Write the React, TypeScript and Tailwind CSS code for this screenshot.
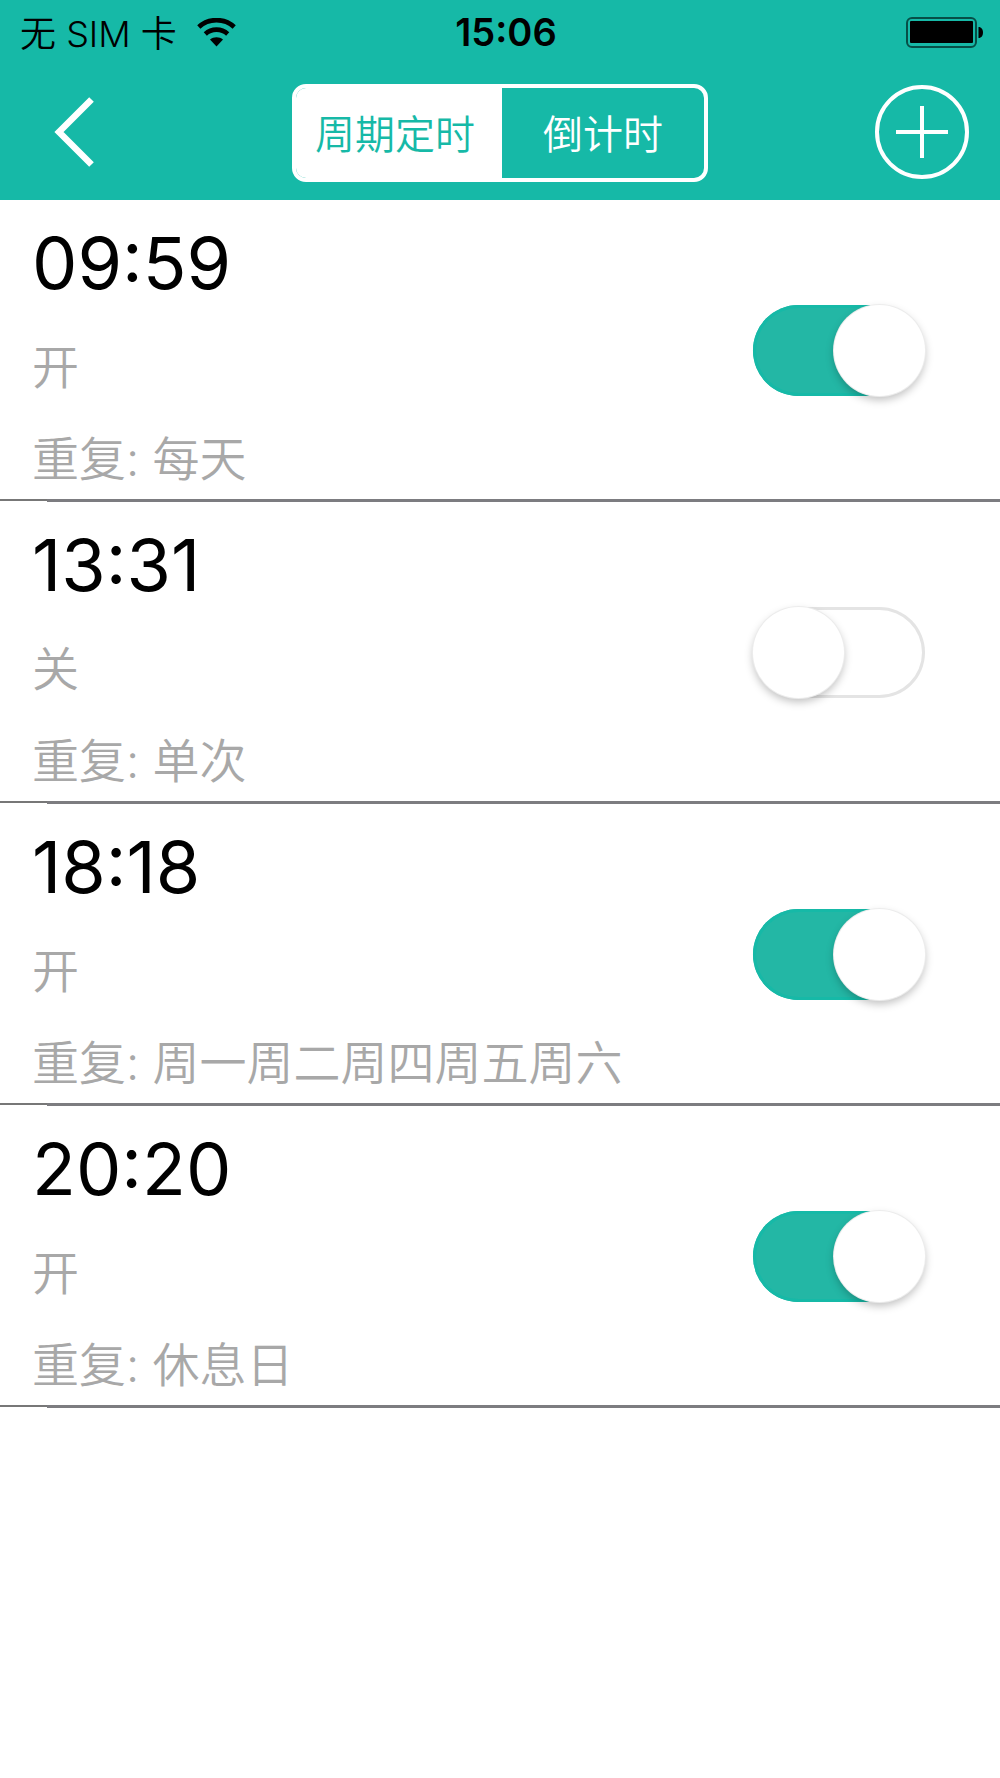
import React, { useState } from 'react';

interface Timer {
  id: number;
  time: string;
  repeat: string;
  enabled: boolean;
}

type TabKey = 'cycle' | 'countdown';

const INITIAL_TIMERS: Timer[] = [
  { id: 1, time: '09:59', repeat: '每天', enabled: true },
  { id: 2, time: '13:31', repeat: '单次', enabled: false },
  { id: 3, time: '18:18', repeat: '周一周二周四周五周六', enabled: true },
  { id: 4, time: '20:20', repeat: '休息日', enabled: true },
];

const StatusBar: React.FC = () => (
  <div className="grid h-16 grid-cols-3 items-center pl-5 pr-4 leading-[40px] text-black">
    <div className="flex items-center gap-5">
      <span className="whitespace-nowrap pt-1 text-[36px] font-[350]">无 SIM 卡</span>
      <svg className="h-[29px] w-[39px]" viewBox="0 0 39 29" fill="none" stroke="currentColor" aria-label="Wi-Fi">
        <path d="M1.800 9C11.500-.2 27.500-.2 37.200 9" strokeWidth="4.600" />
        <path d="M8.300 16C14.500 10.200 24.500 10.200 30.700 16" strokeWidth="4.600" />
        <path d="M13 21.500C16.600 18.500 22.400 18.500 26 21.500L19.500 28.500Z" fill="currentColor" stroke="none" />
      </svg>
    </div>
    <span className="pl-2 text-center text-[38px] font-semibold">15:06</span>
    <svg className="h-[31px] w-[78px] justify-self-end" viewBox="0 0 78 31" aria-label="Battery">
      <rect x="1" y="1" width="69" height="29" rx="5" fill="none" stroke="#064f47" strokeWidth="2" />
      <rect x="4" y="4" width="63" height="22" rx="1" fill="#000" />
      <path d="M72.500 10C75.500 10 77 12.500 77 15.500S75.500 21 72.500 21Z" fill="#000" />
    </svg>
  </div>
);

interface NavBarProps {
  tab: TabKey;
  onTabChange: (tab: TabKey) => void;
}

const NavBar: React.FC<NavBarProps> = ({ tab, onTabChange }) => {
  const active = 'bg-white text-[#16b9a7]';
  const inactive = 'text-white';

  return (
    <nav className="grid h-[136px] grid-cols-[1fr_auto_1fr] items-center pl-[54px] pr-[31px] text-white">
      <button type="button" aria-label="返回" className="justify-self-start">
        <svg className="h-[70px] w-10" viewBox="0 0 40 70" fill="none" stroke="currentColor" strokeWidth="6.500">
          <path d="M37.500 2.500L5 35L37.500 67.500" />
        </svg>
      </button>
      <div className="mr-[23px] mt-0.5 flex h-[98px] w-[416px] overflow-hidden rounded-[14px] border-4 border-white text-[40px] font-[350] leading-[56px]">
        <button
          type="button"
          onClick={() => onTabChange('cycle')}
          className={`w-[206px] pr-2 pt-1 ${tab === 'cycle' ? active : inactive}`}
        >
          周期定时
        </button>
        <button
          type="button"
          onClick={() => onTabChange('countdown')}
          className={`flex-1 pt-1 ${tab === 'countdown' ? active : inactive}`}
        >
          倒计时
        </button>
      </div>
      <button type="button" aria-label="添加" className="justify-self-end">
        <svg className="size-[94px]" viewBox="0 0 94 94" fill="none" stroke="currentColor" strokeWidth="4">
          <circle cx="47" cy="47" r="45" />
          <path d="M21 47H73M47 21V73" />
        </svg>
      </button>
    </nav>
  );
};

interface TimerRowProps {
  timer: Timer;
  onToggle: (id: number) => void;
}

const TimerRow: React.FC<TimerRowProps> = ({ timer, onToggle }) => (
  <li>
    <div className="flex items-center justify-between pb-3 pl-8 pr-[75px] pt-[27px]">
      <div>
        <label htmlFor={`timer-${timer.id}`} className="block text-[72px] leading-[72px] text-black">
          {timer.time}
        </label>
        <p className="mt-10 text-[47px] font-[350] leading-[56px] text-[#a8a8a8]">{timer.enabled ? '开' : '关'}</p>
        <p className="mt-9 text-[47px] font-[350] leading-[56px] text-[#a8a8a8]">重复: {timer.repeat}</p>
      </div>
      <input
        id={`timer-${timer.id}`}
        type="checkbox"
        role="switch"
        checked={timer.enabled}
        onChange={() => onToggle(timer.id)}
        className="mb-3.5 flex h-[91px] w-[172px] shrink-0 cursor-pointer appearance-none rounded-full bg-white shadow-[inset_0_0_0_3px_#e4e4e4] before:size-[91px] before:rounded-full before:bg-white before:shadow-[0_0_0_1px_#ececec,0_4px_8px_rgba(0,0,0,0.25)] checked:justify-end checked:bg-[#23b7a5] checked:shadow-[inset_0_0_0_3px_#16b9a7]"
      />
    </div>
    <div className="flex items-start">
      <span className="h-[2px] w-[47px] bg-[#777777]" />
      <span className="h-[3px] flex-1 bg-[#7c7c80]" />
    </div>
  </li>
);

const App: React.FC = () => {
  const [tab, setTab] = useState<TabKey>('cycle');
  const [timers, setTimers] = useState<Timer[]>(INITIAL_TIMERS);

  const handleToggle = (id: number) => {
    setTimers(timers.map(t => (t.id === id ? { ...t, enabled: !t.enabled } : t)));
  };

  return (
    <div className="min-h-screen bg-white font-['Inter','Noto_Sans_CJK_SC',sans-serif]">
      <header className="bg-[#16b9a7]">
        <StatusBar />
        <NavBar tab={tab} onTabChange={setTab} />
      </header>
      <ul>
        {timers.map(timer => (
          <TimerRow key={timer.id} timer={timer} onToggle={handleToggle} />
        ))}
      </ul>
    </div>
  );
};

export default App;
